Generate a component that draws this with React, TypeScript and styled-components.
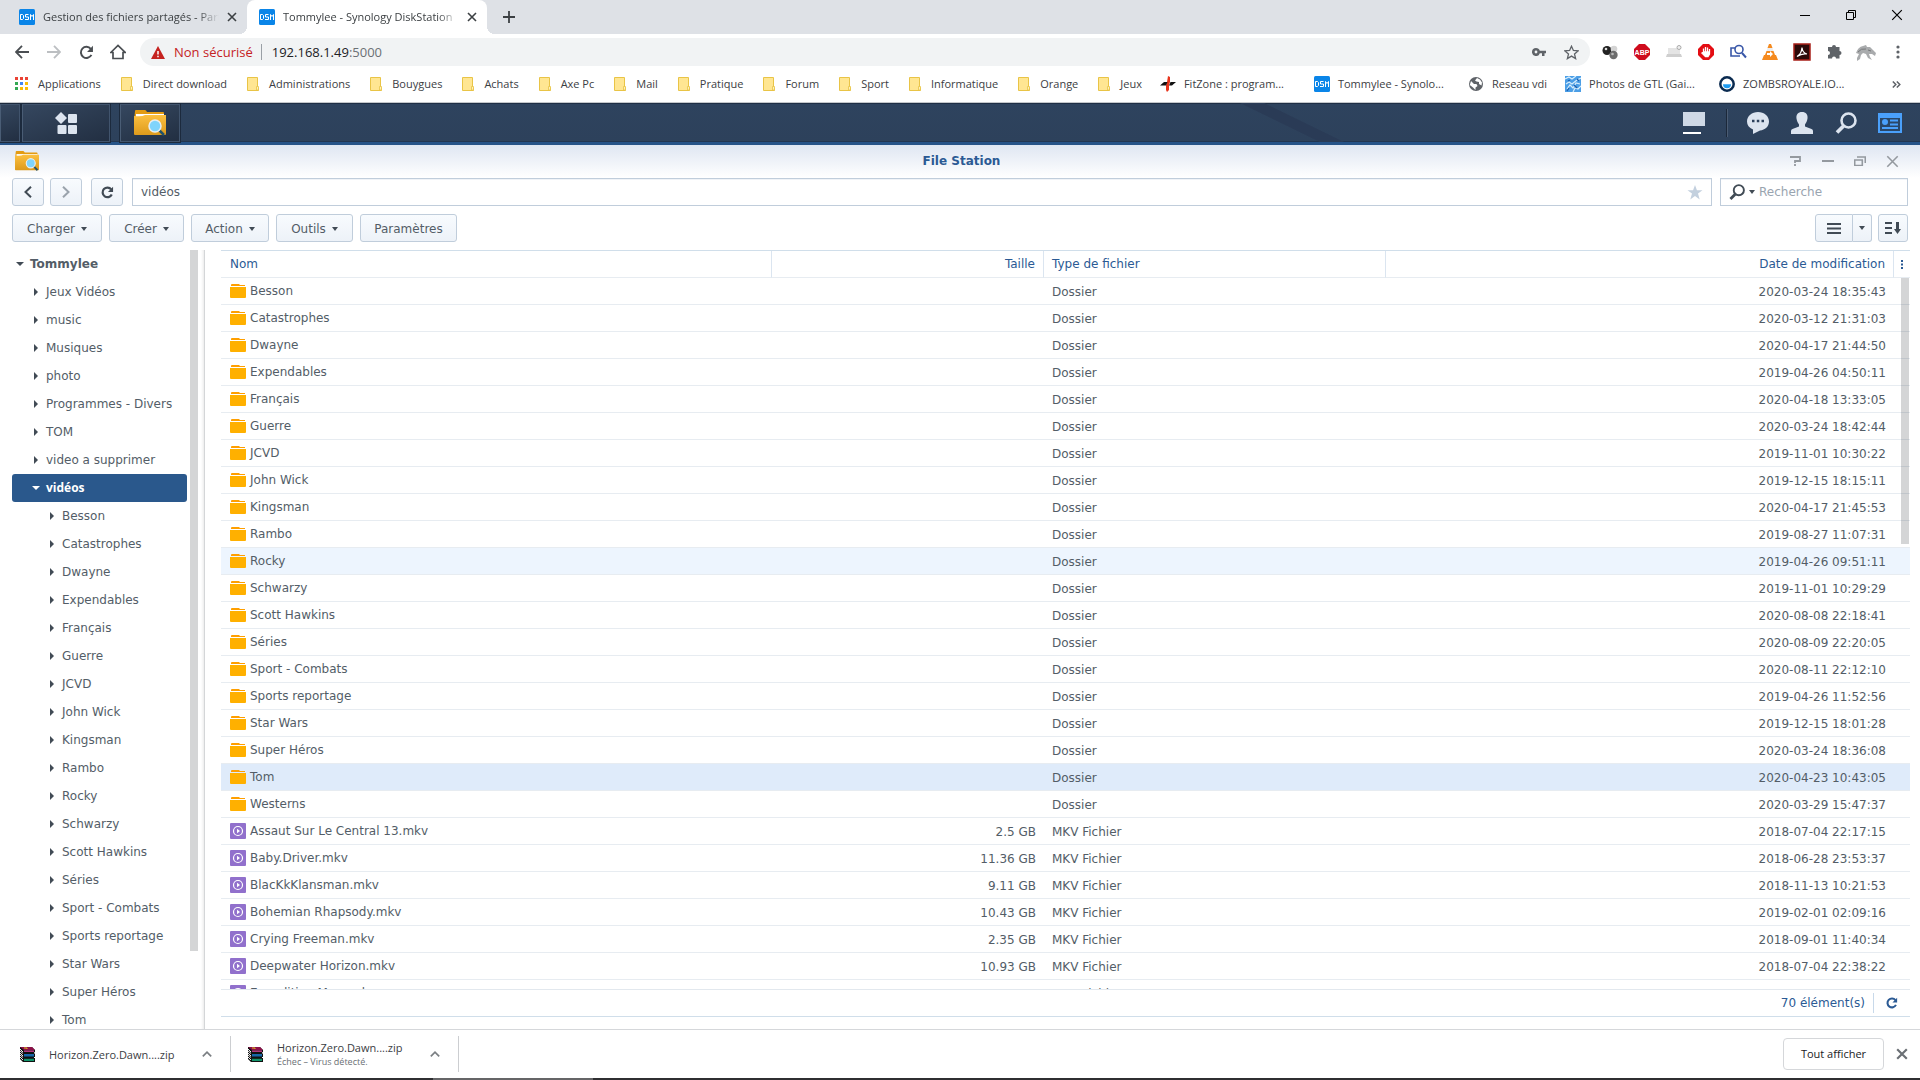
import React from 'react';
import styled, { createGlobalStyle, css } from 'styled-components';

const uiFont = `'Segoe UI', 'Open Sans', 'Noto Sans', sans-serif`;
const dsmFont = `Verdana, 'DejaVu Sans', sans-serif`;

const GlobalStyle = createGlobalStyle`
  *, *::before, *::after { box-sizing: border-box; }
  html, body, #root { height: 100%; }
  body { margin: 0; background: #fff; overflow: hidden; }
  button, input { font: inherit; color: inherit; }
  button { background: none; border: 0; padding: 0; margin: 0; display: inline-flex; align-items: center; justify-content: center; cursor: pointer; }
  a { color: inherit; text-decoration: none; }
  svg { display: block; flex: none; }
`;

const Screen = styled.div`
  height: 100vh;
  display: flex;
  flex-direction: column;
  font-family: ${uiFont};
  font-size: 11px;
  line-height: 16px;
  color: #3c4043;
`;

/* ---------- browser chrome ---------- */

const TabStrip = styled.div`
  flex: none;
  height: 34px;
  display: flex;
  background: #dee1e6;
`;

const Tab = styled.div<{ $active?: boolean }>`
  position: relative;
  width: 240px;
  margin-left: ${p => (p.$active ? 0 : 7)}px;
  padding: 0 10px 0 12px;
  display: flex;
  align-items: center;
  gap: 8px;
  ${p => p.$active && css`
    background: #fff;
    border-radius: 8px 8px 0 0;
    &::before, &::after {
      content: '';
      position: absolute;
      bottom: 0;
      width: 8px;
      height: 8px;
    }
    &::before { left: -8px; background: radial-gradient(circle at 0 0, transparent 8px, #fff 8px); }
    &::after { right: -8px; background: radial-gradient(circle at 100% 0, transparent 8px, #fff 8px); }
  `}
`;

const TabTitle = styled.span`
  flex: 1;
  min-width: 0;
  overflow: hidden;
  white-space: nowrap;
  mask-image: linear-gradient(to right, #000 88%, transparent);
`;

const NewTab = styled.button`
  width: 28px;
  margin-left: 8px;
`;

const WindowControls = styled.div`
  margin-left: auto;
  display: flex;
  height: 29px;
  button { width: 46px; }
`;

const Toolbar = styled.div`
  flex: none;
  height: 36px;
  display: flex;
  align-items: center;
  padding: 0 6px;
  background: #fff;
`;

const ToolButton = styled.button`
  width: 32px;
  height: 28px;
`;

const Omnibox = styled.div`
  flex: 1;
  height: 28px;
  margin: 0 4px 0 6px;
  padding: 0 3px 0 11px;
  border-radius: 14px;
  background: #f1f3f4;
  display: flex;
  align-items: center;
  font-size: 13px;
`;

const Insecure = styled.span`
  color: #c5221f;
  margin-left: 9px;
  padding-right: 8px;
  border-right: 1px solid #9aa0a6;
  line-height: 16px;
`;

const Url = styled.span`
  margin-left: 10px;
  flex: 1;
  color: #202124;
  span { color: #6b7075; }
`;

const Bookmarks = styled.nav`
  flex: none;
  height: 33px;
  display: flex;
  align-items: center;
  gap: 18px;
  padding: 0 19px 4px 14px;
  border-bottom: 1px solid #c4c7cb;
  > button { margin-left: auto; }
`;

const Bookmark = styled.a<{ $long: boolean }>`
  display: flex;
  align-items: center;
  gap: 8px;
  min-width: ${p => (p.$long ? 136 : 0)}px;
  white-space: nowrap;
`;

/* ---------- DSM taskbar ---------- */

const Taskbar = styled.div`
  flex: none;
  height: 42px;
  display: flex;
  background:
    linear-gradient(26deg, transparent 44%, #2a3b56 45%, #2a3b56 55%, transparent 56%) 1222px 0 / 140px 39px no-repeat,
    linear-gradient(#1f2f45 0 1px, #2e435e 1px, #2d415b 38px, #223550 38px);
  border-bottom: 3px solid #265388;
`;

const TaskButton = styled.button<{ $width: number; $gap?: number }>`
  width: ${p => p.$width}px;
  height: 38px;
  margin: 1px 0 0 ${p => p.$gap ?? 0}px;
  border: 1px solid #41546d;
  border-left-color: #4a5d75;
  outline: 1px solid #1c2a3d;
  background: linear-gradient(160deg, #35475f, #222f42);
`;

const TaskTray = styled.div`
  margin-left: auto;
  display: flex;
  align-items: center;
  padding-right: 8px;
  button { width: 44px; height: 38px; }
`;

const TraySeparator = styled.span`
  width: 2px;
  height: 28px;
  margin: 0 8px 0 10px;
  background: #1b283a;
  border-right: 1px solid #4b5c73;
`;

/* ---------- File Station window ---------- */

const Window = styled.main`
  flex: 1;
  min-height: 0;
  display: flex;
  flex-direction: column;
  font-family: ${dsmFont};
  font-size: 12px;
  color: #535d67;
`;

const TitleBar = styled.header`
  flex: none;
  height: 33px;
  display: grid;
  grid-template-columns: 1fr auto 1fr;
  align-items: center;
  padding: 0 12px 1px 15px;
  background: linear-gradient(#dfe6f2, #fff);
`;

const WindowTitle = styled.h1`
  margin: 0;
  font-size: 12px;
  line-height: 16px;
  font-weight: 700;
  color: #2b5a94;
`;

const TitleActions = styled.div`
  justify-self: end;
  display: flex;
  button { width: 32px; height: 24px; }
`;

const buttonFace = css`
  height: 28px;
  border: 1px solid #c0cddb;
  border-radius: 3px;
  background: linear-gradient(#f8fbfe, #edf2f8);
`;

const Bar = styled.div`
  flex: none;
  display: flex;
  align-items: center;
  padding: 0 12px;
  margin-bottom: 8px;
`;

const NavButton = styled.button<{ $gap?: number }>`
  ${buttonFace}
  width: 32px;
  margin-right: ${p => p.$gap ?? 6}px;
`;

const Field = styled.label<{ $width?: number }>`
  height: 28px;
  min-width: 0;
  display: flex;
  align-items: center;
  gap: 4px;
  border: 1px solid #c0cddb;
  padding: 0 8px;
  flex: ${p => (p.$width ? `0 0 ${p.$width}px` : '1')};
  margin-left: ${p => (p.$width ? 8 : 0)}px;
  box-shadow: inset 0 1px #f0f3f7;
  input {
    flex: 1;
    min-width: 0;
    border: 0;
    padding: 0;
    outline: 0;
    background: none;
    &::placeholder { color: #99a4af; opacity: 1; }
  }
`;

const ActionButton = styled.button<{ $width: number }>`
  ${buttonFace}
  width: ${p => p.$width}px;
  margin-right: 7px;
  padding-top: 1px;
  gap: 6px;
`;

const ViewTools = styled.div`
  margin-left: auto;
  display: flex;
`;

const ViewButton = styled.button<{ $width: number; $join?: 'left' | 'right' }>`
  ${buttonFace}
  width: ${p => p.$width}px;
  ${p => p.$join === 'left' && css`border-radius: 3px 0 0 3px;`}
  ${p => p.$join === 'right' && css`border-radius: 0 3px 3px 0; border-left: 0; margin-right: 6px;`}
`;

const Content = styled.div`
  flex: 1;
  min-height: 0;
  display: flex;
`;

const Sidebar = styled.aside`
  position: relative;
  flex: none;
  width: 205px;
  padding-left: 12px;
  overflow: hidden;
  border-right: 1px solid #d4d6d8;
  box-shadow: inset -3px 0 3px -2px #e8e8e8;
`;

const Scrollbar = styled.span<{ $top: number; $right: number; $height: number }>`
  position: absolute;
  top: ${p => p.$top}px;
  right: ${p => p.$right}px;
  width: 8px;
  height: ${p => p.$height}%;
  background: rgba(40, 44, 48, 0.2);
`;

const Tree = styled.ul`
  list-style: none;
  margin: 0;
  padding: 0;
`;

const TreeNode = styled.button<{ $level: number; $selected?: boolean }>`
  width: 175px;
  height: 28px;
  justify-content: flex-start;
  gap: 6px;
  padding-left: ${p => [4, 20, 36][p.$level]}px;
  border-radius: 3px;
  white-space: nowrap;
  font-weight: ${p => (p.$level === 0 ? 700 : 400)};
  ${p => p.$selected && css`
    background: #2a588c;
    color: #fff;
    font-family: 'Open Sans', sans-serif;
    font-weight: 700;
  `}
`;

const ArrowBox = styled.span`
  width: 8px;
  display: flex;
  justify-content: center;
`;

const FilePane = styled.section`
  flex: 1;
  min-width: 0;
  display: flex;
  flex-direction: column;
  padding: 0 10px 12px 16px;
`;

const TableArea = styled.div`
  position: relative;
  flex: 1;
  min-height: 0;
  overflow: hidden;
  border-top: 1px solid #d0deea;
`;

const FileTable = styled.table`
  width: 100%;
  table-layout: fixed;
  border-collapse: separate;
  border-spacing: 0;
  th, td {
    height: 27px;
    padding: 0 8px;
    text-align: left;
    white-space: nowrap;
    overflow: hidden;
    border-bottom: 1px solid #e7ecf1;
    line-height: 16px;
  }
  th {
    font-weight: 400;
    color: #2b5a94;
    border-right: 1px solid #dbe5f0;
  }
  td + td { padding-top: 2px; }
  th:last-child { border-right: 0; padding: 0; }
  th:first-child, td:first-child { padding-left: 9px; }
`;

const Cell = styled.td<{ $right?: boolean }>`
  && { text-align: ${p => (p.$right ? 'right' : 'left')}; }
`;

const HeadCell = styled.th<{ $right?: boolean }>`
  && { text-align: ${p => (p.$right ? 'right' : 'left')}; }
`;

const Row = styled.tr<{ $tone?: string }>`
  background: ${p => p.$tone ?? 'transparent'};
`;

const FileName = styled.span`
  display: flex;
  align-items: center;
  gap: 4px;
`;

const StatusBar = styled.footer`
  flex: none;
  height: 28px;
  display: flex;
  align-items: center;
  justify-content: flex-end;
  border-top: 1px solid #e2e8ee;
  border-bottom: 1px solid #d0deea;
  color: #2b5a94;
  button { width: 37px; height: 20px; border-left: 1px solid #c8d9ea; margin-left: 8px; }
`;

/* ---------- download shelf ---------- */

const Shelf = styled.footer`
  flex: none;
  height: 49px;
  display: flex;
  align-items: center;
  border-top: 1px solid #d5d7da;
  padding-right: 12px;
`;

const Download = styled.div<{ $lead: number }>`
  height: 36px;
  padding: 0 18px 0 ${p => p.$lead}px;
  display: flex;
  align-items: center;
  border-right: 1px solid #ccced1;
`;

const DownloadText = styled.span`
  display: flex;
  flex-direction: column;
  width: 141px;
  margin: 0 12px 0 13px;
  padding-top: 2px;
  font-size: 11px;
  line-height: 14px;
  small { font-size: 9px; line-height: 14px; color: #6b7075; }
`;

const ShowAll = styled.button`
  margin-left: auto;
  margin-right: 12px;
  width: 101px;
  height: 32px;
  border: 1px solid #d5d7da;
  border-radius: 4px;
  color: #202124;
`;

const DesktopEdge = styled.div`
  flex: none;
  height: 2px;
  background: linear-gradient(to right, #2f2f31 433px, #656567 433px 593px, #2f2f31 593px);
`;

/* ---------- icons ---------- */

const DsmIcon = () => (
  <svg width="16" height="16" viewBox="0 0 16 16" aria-hidden="true">
    <rect width="16" height="16" rx="1.500" fill="#0a85e8" />
    <path d="M1.500 5.500h2l1 1v3l-1 1h-2zM9.500 5.500H6.500V8h3v2.500H6M11.500 11V5.500l1.500 2 1.500-2V11" fill="none" stroke="#fff" />
  </svg>
);
const Cross = ({ size = 10, color = '#3c4043', w = 1.6 }: { size?: number; color?: string; w?: number }) => (
  <svg width={size} height={size} viewBox="0 0 10 10">
    <path d="M1 1l8 8M9 1l-8 8" stroke={color} strokeWidth={w} />
  </svg>
);
const FolderMark = () => (
  <svg width="16" height="16" viewBox="0 0 16 16">
    <path d="M2.500 1.500h10v9.500l1 1v2.500h-11z" fill="#ffe692" stroke="#e9c446" />
    <path d="M11.500 14v-3.500h2v3.500z" fill="#fff0b8" stroke="#e9c446" strokeWidth=".8" />
  </svg>
);
const AppsMark = () => (
  <svg width="16" height="16" viewBox="0 0 16 16">
    {['#ea4335', '#ea4335', '#ea4335', '#34a853', '#4285f4', '#fbbc05', '#34a853', '#fbbc05', '#fbbc05'].map((c, i) => (
      <rect key={i} x={1 + (i % 3) * 5} y={1 + Math.floor(i / 3) * 5} width="3" height="3" fill={c} />
    ))}
  </svg>
);
const FitIcon = () => (
  <svg width="16" height="16" viewBox="0 0 16 16">
    <path d="M8 0l2 1 0 5-1 3 0 5-2 2-1-2 0-5 1-3z" fill="#e8341c" />
    <path d="M0 9.500L4 6h3.500L6 9.500zM9 9.500L10.500 6H16l-4 3.500z" fill="#111" />
  </svg>
);
const GlobeIcon = () => (
  <svg width="16" height="16" viewBox="0 0 16 16">
    <circle cx="8" cy="8" r="7" fill="#5f6368" />
    <path d="M3 5l3 3h2.500l1 2-2 1.500V14L5 11.500 1.800 9zM9 2l-2 2.500 1.500 1 2.500.5 0 2 2.500 1.500.5-3L12 3.500z" fill="#fff" />
  </svg>
);
const PhotoIcon = () => (
  <svg width="16" height="16" viewBox="0 0 16 16">
    <rect width="16" height="16" fill="#4b9ee6" />
    <path d="M0 3l4-2 3 2 4-3M1 8l3-2 3 2 5-4 4-2M2 13l3-4 3 3 3-5 4 1M8 16l2-4 3 1 3-3" fill="none" stroke="#d8eefc" strokeWidth="1.200" />
    <path d="M3 5l2-1M9 9l3 3M4 12l-2 3M12 3l2 2" stroke="#1c5fb0" strokeWidth="1.300" />
  </svg>
);
const ZombsIcon = () => (
  <svg width="16" height="16" viewBox="0 0 16 16">
    <circle cx="8" cy="8" r="6.700" fill="#fff" stroke="#0b2b50" strokeWidth="2.500" />
    <path d="M4 8.200h8a4 4 0 0 1-8 0z" fill="#1e9bf0" />
  </svg>
);
const StationIcon = ({ w, h }: { w: number; h: number }) => (
  <svg width={w} height={h} viewBox="0 0 32 26" preserveAspectRatio="none">
    <defs>
      <linearGradient id="st" x1="0" y1="0" x2="0" y2="1"><stop offset="0" stopColor="#fcc040" /><stop offset="1" stopColor="#dd9a1c" /></linearGradient>
    </defs>
    <path d="M1 1q0-1 1-1h9q1 0 2 2h16q1 0 1 1v8H0z" fill="#e39b12" />
    <path d="M2 4h28v5H2z" fill="#fff" />
    <path d="M0 6q8 1 11-1l21 0v19q0 1-1 1H1q-1 0-1-1z" fill="url(#st)" />
    <path d="M25 20l5 5" stroke="#23536b" strokeWidth="2.500" />
    <circle cx="21" cy="16" r="6" fill="#7fd4fb" stroke="#e9eef0" strokeWidth="1.500" />
  </svg>
);
const Caret = ({ color = '#414b55' }: { color?: string }) => (
  <svg width="6" height="4" viewBox="0 0 6 4"><path d="M0 0h6L3 4z" fill={color} /></svg>
);
const ReloadIcon = ({ size, color, w = 2 }: { size: number; color: string; w?: number }) => (
  <svg width={size} height={size} viewBox="0 0 14 14">
    <path d="M11.600 9.200A5.200 5.200 0 1 1 11 3.600" fill="none" stroke={color} strokeWidth={w} />
    <path d="M13 .8v5.700H7.500z" fill={color} />
  </svg>
);
const ListFolder = () => (
  <svg width="16" height="14" viewBox="0 0 16 14">
    <path d="M1 1q0-1 1-1h7l1 1h5v1H1z" fill="#ff9f00" />
    <path d="M0 3h16v10q0 1-1 1H1q-1 0-1-1z" fill="#ffb000" />
  </svg>
);
const VideoIcon = () => (
  <svg width="16" height="16" viewBox="0 0 16 16">
    <rect width="16" height="16" rx="1" fill="#9170cc" />
    <circle cx="8" cy="8" r="4.500" fill="none" stroke="#fff" strokeWidth="1.200" />
    <path d="M7 5.800L10 8l-3 2.200z" fill="#fff" />
  </svg>
);
const RarIcon = () => (
  <svg width="17" height="17" viewBox="0 0 17 17">
    <path d="M1 1h12l3 3v2l-1 0 1 1v4l-1 0 1 1v4H4l-3-3V10l0-1V6L1 5z" fill="#111" />
    <path d="M1 1h12l3 3H5z" fill="#8c1048" />
    <path d="M5 4.500h10v1.300H5z" fill="#d8409a" />
    <path d="M5 8h10v2.500H5z" fill="#1667a8" />
    <path d="M5 12.800h10v2.200H5z" fill="#11946a" />
    <path d="M1 3l3 3M1 7l3 3M1 11l3 3M1 5l3 2.500M1 9l3 2.500" stroke="#eee" />
    <path d="M5 2h3v1" stroke="#e5c01c" fill="none" />
    <path d="M15 7h2M15 11.500h2" stroke="#fff" />
  </svg>
);
const Magnifier = ({ w, h, color }: { w: number; h: number; color: string }) => (
  <svg width={w} height={h} viewBox="0 0 22 22" preserveAspectRatio="none">
    <circle cx="13.500" cy="8.500" r="7" fill="none" stroke={color} strokeWidth="2.600" />
    <path d="M8.500 14l-6.500 6.500" stroke={color} strokeWidth="3.800" />
  </svg>
);
const ShelfChevron = () => (
  <svg width="10" height="6" viewBox="0 0 10 6"><path d="M.8 5.300L5 1.200l4.200 4.100" fill="none" stroke="#7b7f83" strokeWidth="1.700" /></svg>
);

const extensions: [string, React.ReactNode][] = [
  ['Billes', <><circle cx="5" cy="6.500" r="4.500" fill="#222" /><circle cx="4" cy="5" r="1.300" fill="#ddd" /><circle cx="12" cy="5" r="3.300" fill="#d4d4d4" /><circle cx="11.500" cy="11" r="4.200" fill="#6d6d6d" /><circle cx="10.500" cy="10" r="1.300" fill="#bbb" /></>],
  ['ABP', <><path d="M5 0h6l5 5v6l-5 5H5l-5-5V5z" fill="#cf0c1d" /><text x="8" y="10.800" fontSize="7" fontWeight="700" textAnchor="middle" fill="#fff" fontFamily="Liberation Sans, sans-serif">ABP</text></>],
  ['Capture', <><path d="M2 4h12v6H2z" fill="#e4e4e4" /><path d="M1 10h14l1 3H0z" fill="#cfcfcf" /><circle cx="13" cy="3.500" r="2" fill="#eee" stroke="#aaa" /></>],
  ['AdBlock', <><path d="M5 0h6l5 5v6l-5 5H5l-5-5V5z" fill="#e40d13" /><path d="M5.500 8.500V4.500M7.500 8V3M9.500 8V3.500M11.500 9V5M5.500 8h6v2l-1.500 2.500H7.500L4 9z" fill="#fff" stroke="#fff" strokeWidth="1.300" /></>],
  ['Recherche', <><path d="M5 4H1v8h9" fill="none" stroke="#3957a8" strokeWidth="1.600" /><circle cx="9" cy="5.500" r="4" fill="#fff" stroke="#3957a8" strokeWidth="1.600" /><path d="M12 9l4 4.500" stroke="#3957a8" strokeWidth="2" /></>],
  ['VLC', <><path d="M7 0h2l1.500 4h-5z" fill="#f58a1f" /><path d="M5.500 4h5l1 3h-7z" fill="#eee" /><path d="M4.500 7h7l1.500 4h1l2 5H0l2-5h1z" fill="#f58a1f" /><path d="M5 9h3V7l3 3-3 3v-2H5z" fill="#fff" /></>],
  ['Acrobat', <><rect width="16" height="16" fill="#2c0a09" stroke="#a8201a" strokeWidth="1.500" /><path d="M3 12.500Q7.500 10 8 3.500 8.500 9 13 10 8 9 3 12.500z" fill="none" stroke="#fff" strokeWidth="1.200" /></>],
  ['Extensions', <path d="M6 3a2 2 0 0 1 4 0h3.500v4a2 2 0 0 1 0 4v3.500H10a2 2 0 0 0-4 0H2V11a2 2 0 0 0 0-4V3z" fill="#5f6368" />],
  ['Profil', <><path d="M-2 9Q0 3 5 2l3-1 1 2 3 0 3 3 3 3-1 3-3-2-3 0 1 3 2 3-4-2-2-4-3-1-2 2-1 4-3 2 0-3 2-4z" fill="#a9abad" /><path d="M0 8q3-4 8-3M10 6l3 1" stroke="#77797b" fill="none" /></>],
];

/* ---------- data ---------- */

const bookmarks: [string, React.ReactNode][] = [
  ['Applications', <AppsMark />],
  ...['Direct download', 'Administrations', 'Bouygues', 'Achats', 'Axe Pc', 'Mail', 'Pratique', 'Forum', 'Sport', 'Informatique', 'Orange', 'Jeux']
    .map(n => [n, <FolderMark />] as [string, React.ReactNode]),
  ['FitZone : program...', <FitIcon />],
  ['Tommylee - Synolo...', <DsmIcon />],
  ['Reseau vdi', <GlobeIcon />],
  ['Photos de GTL (Gai...', <PhotoIcon />],
  ['ZOMBSROYALE.IO...', <ZombsIcon />],
];

const folders: [string, string][] = [
  ['Besson', '2020-03-24 18:35:43'],
  ['Catastrophes', '2020-03-12 21:31:03'],
  ['Dwayne', '2020-04-17 21:44:50'],
  ['Expendables', '2019-04-26 04:50:11'],
  ['Français', '2020-04-18 13:33:05'],
  ['Guerre', '2020-03-24 18:42:44'],
  ['JCVD', '2019-11-01 10:30:22'],
  ['John Wick', '2019-12-15 18:15:11'],
  ['Kingsman', '2020-04-17 21:45:53'],
  ['Rambo', '2019-08-27 11:07:31'],
  ['Rocky', '2019-04-26 09:51:11'],
  ['Schwarzy', '2019-11-01 10:29:29'],
  ['Scott Hawkins', '2020-08-08 22:18:41'],
  ['Séries', '2020-08-09 22:20:05'],
  ['Sport - Combats', '2020-08-11 22:12:10'],
  ['Sports reportage', '2019-04-26 11:52:56'],
  ['Star Wars', '2019-12-15 18:01:28'],
  ['Super Héros', '2020-03-24 18:36:08'],
  ['Tom', '2020-04-23 10:43:05'],
  ['Westerns', '2020-03-29 15:47:37'],
];

const videos: [string, string, string][] = [
  ['Assaut Sur Le Central 13.mkv', '2.5 GB', '2018-07-04 22:17:15'],
  ['Baby.Driver.mkv', '11.36 GB', '2018-06-28 23:53:37'],
  ['BlacKkKlansman.mkv', '9.11 GB', '2018-11-13 10:21:53'],
  ['Bohemian Rhapsody.mkv', '10.43 GB', '2019-02-01 02:09:16'],
  ['Crying Freeman.mkv', '2.35 GB', '2018-09-01 11:40:34'],
  ['Deepwater Horizon.mkv', '10.93 GB', '2018-07-04 22:38:22'],
  ['Expedition Mars.mkv', '', ''],
];

const tones: Record<string, string> = { Rocky: '#edf5fe', Tom: '#dfebfa' };
const shares = ['Jeux Vidéos', 'music', 'Musiques', 'photo', 'Programmes - Divers', 'TOM', 'video a supprimer'];

const TreeItem = ({ name, level, open, selected }: { name: string; level: number; open?: boolean; selected?: boolean }) => (
  <li>
    <TreeNode $level={level} $selected={selected}>
      <ArrowBox>
        {open ? (
          <svg width="8" height="4" viewBox="0 0 8 4"><path d="M0 0h8L4 4z" fill={selected ? '#fff' : '#414b55'} /></svg>
        ) : (
          <svg width="4" height="8" viewBox="0 0 4 8"><path d="M0 0l4 4-4 4z" fill="#414b55" /></svg>
        )}
      </ArrowBox>
      {name}
    </TreeNode>
  </li>
);

export default function App() {
  return (
    <Screen>
      <GlobalStyle />
      <TabStrip>
        <Tab>
          <DsmIcon />
          <TabTitle>Gestion des fichiers partagés - Partage</TabTitle>
          <button aria-label="Fermer l'onglet"><Cross /></button>
        </Tab>
        <Tab $active>
          <DsmIcon />
          <TabTitle>Tommylee - Synology DiskStation</TabTitle>
          <button aria-label="Fermer l'onglet"><Cross /></button>
        </Tab>
        <NewTab aria-label="Nouvel onglet">
          <svg width="12" height="12" viewBox="0 0 12 12"><path d="M6 0v12M0 6h12" stroke="#3c4043" strokeWidth="1.800" /></svg>
        </NewTab>
        <WindowControls>
          <button aria-label="Réduire"><svg width="10" height="10"><path d="M0 5.500h10" stroke="#000" /></svg></button>
          <button aria-label="Restaurer"><svg width="10" height="10"><path d="M.5 2.500h7v7h-7zM2.500 2.500v-2h7v7h-2" fill="none" stroke="#000" /></svg></button>
          <button aria-label="Fermer"><Cross color="#000" w={1} size={12} /></button>
        </WindowControls>
      </TabStrip>

      <Toolbar>
        <ToolButton aria-label="Précédent"><svg width="14" height="14" viewBox="0 0 14 14"><path d="M14 7H1.500M7 .8L1 7l6 6.200" fill="none" stroke="#4a4e52" strokeWidth="1.800" /></svg></ToolButton>
        <ToolButton aria-label="Suivant"><svg width="14" height="14" viewBox="0 0 14 14"><path d="M0 7h12.500M7 .8L13 7l-6 6.200" fill="none" stroke="#bcbfc2" strokeWidth="1.800" /></svg></ToolButton>
        <ToolButton aria-label="Actualiser"><ReloadIcon size={15} color="#4a4e52" w={1.8} /></ToolButton>
        <ToolButton aria-label="Accueil"><svg width="16" height="16" viewBox="0 0 16 16"><path d="M.8 8.500L8 1.500l7.200 7H13v6H3v-6z" fill="none" stroke="#4a4e52" strokeWidth="1.700" /></svg></ToolButton>
        <Omnibox>
          <svg width="14" height="13" viewBox="0 0 14 13"><path d="M7 0l7 13H0z" fill="#c5221f" /><path d="M7 5v3.500M7 9.800v1.400" stroke="#fff" strokeWidth="1.500" /></svg>
          <Insecure>Non sécurisé</Insecure>
          <Url>192.168.1.49<span>:5000</span></Url>
          <ToolButton aria-label="Mots de passe"><svg width="14" height="8" viewBox="0 0 14 8"><path d="M4 0a4 4 0 1 0 3.800 5.200H10V8h2.500V5.200H14V2.800H7.800A4 4 0 0 0 4 0zm0 2.600a1.400 1.400 0 1 1 0 2.800 1.400 1.400 0 0 1 0-2.800z" fill="#5f6368" fillRule="evenodd" /></svg></ToolButton>
          <ToolButton aria-label="Ajouter aux favoris"><svg width="15" height="15" viewBox="0 0 15 15"><path d="M7.500 1.200l1.900 4.300 4.700.4-3.600 3.100 1.100 4.600-4.100-2.500-4.100 2.500 1.100-4.600L.9 5.900l4.700-.4z" fill="none" stroke="#5f6368" strokeWidth="1.300" /></svg></ToolButton>
        </Omnibox>
        {extensions.map(([name, art]) => (
          <ToolButton key={name} aria-label={name}><svg width="16" height="16" viewBox="0 0 16 16" overflow="visible">{art}</svg></ToolButton>
        ))}
        <ToolButton aria-label="Menu"><svg width="4" height="14" viewBox="0 0 4 14"><g fill="#5f6368"><circle cx="2" cy="2" r="1.600" /><circle cx="2" cy="7" r="1.600" /><circle cx="2" cy="12" r="1.600" /></g></svg></ToolButton>
      </Toolbar>

      <Bookmarks aria-label="Favoris">
        {bookmarks.map(([name, icon]) => (
          <Bookmark key={name} href="#" $long={name.endsWith('...')}>{icon}{name}</Bookmark>
        ))}
        <button aria-label="Autres favoris"><svg width="9" height="7" viewBox="0 0 9 7"><path d="M.8.5l3 3-3 3M4.800.5l3 3-3 3" fill="none" stroke="#5f6368" strokeWidth="1.500" /></svg></button>
      </Bookmarks>

      <Taskbar>
        <TaskButton $width={20} aria-label="Afficher le bureau" />
        <TaskButton $width={88} $gap={2} aria-label="Menu principal">
          <svg width="22" height="22" viewBox="0 0 22 22" fill="#dce4ef"><path d="M6 0l6 6-6 6-6-6z" /><rect x="13" y="2" width="9" height="9" rx="1" /><rect x="2.500" y="13" width="9" height="9" rx="1" /><rect x="13" y="13" width="9" height="9" rx="1" /></svg>
        </TaskButton>
        <TaskButton $width={60} $gap={10} aria-label="File Station"><StationIcon w={32} h={26} /></TaskButton>
        <TaskTray>
          <button aria-label="Bureau"><svg width="22" height="22" viewBox="0 0 22 22" fill="#cfd9e6"><path d="M0 0h22v14H0z" /><path d="M0 20h18v2H0z" fill="#fff" /></svg></button>
          <TraySeparator />
          <button aria-label="Notifications"><svg width="22" height="22" viewBox="0 0 22 22"><path d="M11 0c6 0 11 4 11 9.500 0 5-4 8.500-9 9L6 22v-4.500C2 16 0 13 0 9.500 0 4 5 0 11 0z" fill="#dce4ef" /><path d="M5 9h2.500M9.800 9h2.500M14.500 9H17" stroke="#2c405b" strokeWidth="2.500" /></svg></button>
          <button aria-label="Utilisateur"><svg width="22" height="22" viewBox="0 0 22 22"><path d="M11 0c4 0 6 2.500 5.500 6.500-.3 2.500-1.500 4.500-2.500 6v2l6.500 2.500q1.500.7 1.500 2V22H0v-3q0-1.300 1.500-2L8 14.500v-2C7 11 5.800 9 5.500 6.500 5 2.500 7 0 11 0z" fill="#dce4ef" /></svg></button>
          <button aria-label="Rechercher"><Magnifier w={22} h={22} color="#dce4ef" /></button>
          <button aria-label="Widgets"><svg width="24" height="20" viewBox="0 0 24 20"><path d="M0 0h24v20H0z" fill="#4aa0fb" /><path d="M2 5h20v13H2z" fill="#2a4768" /><circle cx="7" cy="9" r="3" fill="#4aa0fb" /><path d="M12 7.500h8M12 11.500h8M4 15h16" stroke="#4aa0fb" strokeWidth="2" /></svg></button>
        </TaskTray>
      </Taskbar>

      <Window>
        <TitleBar>
          <StationIcon w={24} h={20} />
          <WindowTitle>File Station</WindowTitle>
          <TitleActions>
            <button aria-label="Aide"><svg width="12" height="10" viewBox="0 0 12 10"><path d="M0 1h10v4H5v2M5 8v2" fill="none" stroke="#94999f" strokeWidth="1.800" /></svg></button>
            <button aria-label="Réduire la fenêtre"><svg width="12" height="10"><path d="M0 5h12" stroke="#94999f" strokeWidth="2" /></svg></button>
            <button aria-label="Restaurer la fenêtre"><svg width="12" height="10" viewBox="0 0 12 10"><path d="M3 1h9M11.300 1v6M0 4h9M.7 4v5.500h7.600V4" fill="none" stroke="#94999f" strokeWidth="1.600" /></svg></button>
            <button aria-label="Fermer la fenêtre"><Cross size={13} color="#94999f" w={1.2} /></button>
          </TitleActions>
        </TitleBar>

        <Bar>
          <NavButton aria-label="Dossier précédent"><svg width="8" height="12" viewBox="0 0 8 12"><path d="M7 .8L1.500 6 7 11.200" fill="none" stroke="#414b55" strokeWidth="2" /></svg></NavButton>
          <NavButton $gap={9} aria-label="Dossier suivant"><svg width="8" height="12" viewBox="0 0 8 12"><path d="M1 .8L6.500 6 1 11.200" fill="none" stroke="#9aa3ac" strokeWidth="2" /></svg></NavButton>
          <NavButton $gap={9} aria-label="Recharger"><ReloadIcon size={13} color="#414b55" w={2.4} /></NavButton>
          <Field>
            <input aria-label="Chemin" defaultValue="vidéos" />
            <svg width="16" height="15" viewBox="0 0 14 14"><path d="M7 0l1.800 5H14L9.800 8l1.600 5.500L7 10.300l-4.400 3.200L4.200 8 0 5h5.200z" fill="#c3d0de" /></svg>
          </Field>
          <Field $width={188}>
            <Magnifier w={16} h={16} color="#414b55" />
            <Caret />
            <input aria-label="Recherche" placeholder="Recherche" />
          </Field>
        </Bar>

        <Bar>
          {([['Charger', 90], ['Créer', 75], ['Action', 78], ['Outils', 77]] as [string, number][]).map(([name, width]) => (
            <ActionButton key={name} $width={width}>{name}<Caret /></ActionButton>
          ))}
          <ActionButton $width={97}>Paramètres</ActionButton>
          <ViewTools>
            <ViewButton $width={38} $join="left" aria-label="Vue en liste"><svg width="14" height="11" viewBox="0 0 14 11"><path d="M0 1h14M0 5.500h14M0 10h14" stroke="#414b55" strokeWidth="1.800" /></svg></ViewButton>
            <ViewButton $width={19} $join="right" aria-label="Choisir la vue"><Caret /></ViewButton>
            <ViewButton $width={30} aria-label="Trier"><svg width="16" height="12" viewBox="0 0 16 12"><path d="M0 1h7M0 6h7M0 11h7" stroke="#414b55" strokeWidth="2" /><path d="M12.500 0v8" stroke="#414b55" strokeWidth="3" /><path d="M9 7h7l-3.500 5z" fill="#414b55" /></svg></ViewButton>
          </ViewTools>
        </Bar>

        <Content>
          <Sidebar>
            <Tree>
              <TreeItem name="Tommylee" level={0} open />
              {shares.map(n => <TreeItem key={n} name={n} level={1} />)}
              <TreeItem name="vidéos" level={1} open selected />
              {folders.slice(0, 19).map(([n]) => <TreeItem key={n} name={n} level={2} />)}
            </Tree>
            <Scrollbar $top={0} $right={6} $height={90} />
          </Sidebar>

          <FilePane>
            <TableArea>
              <FileTable>
                <colgroup>
                  <col style={{ width: 551 }} />
                  <col style={{ width: 272 }} />
                  <col style={{ width: 342 }} />
                  <col />
                  <col style={{ width: 16 }} />
                </colgroup>
                <thead>
                  <tr>
                    <HeadCell>Nom</HeadCell>
                    <HeadCell $right>Taille</HeadCell>
                    <HeadCell>Type de fichier</HeadCell>
                    <HeadCell $right>Date de modification</HeadCell>
                    <HeadCell aria-label="Colonnes"><svg width="16" height="9"><path d="M8 0v2M8 3.500v2M8 7v2" stroke="#2b5a94" strokeWidth="2" /></svg></HeadCell>
                  </tr>
                </thead>
                <tbody>
                  {folders.map(([name, date]) => (
                    <Row key={name} $tone={tones[name]}>
                      <Cell><FileName><ListFolder />{name}</FileName></Cell>
                      <Cell $right />
                      <Cell>Dossier</Cell>
                      <Cell $right>{date}</Cell>
                      <Cell />
                    </Row>
                  ))}
                  {videos.map(([name, size, date]) => (
                    <Row key={name}>
                      <Cell><FileName><VideoIcon />{name}</FileName></Cell>
                      <Cell $right>{size}</Cell>
                      <Cell>MKV Fichier</Cell>
                      <Cell $right>{date}</Cell>
                      <Cell />
                    </Row>
                  ))}
                </tbody>
              </FileTable>
              <Scrollbar $top={27} $right={1} $height={36} />
            </TableArea>
            <StatusBar>
              70 élément(s)
              <button aria-label="Rafraîchir la liste"><ReloadIcon size={12} color="#2b5a94" w={2.4} /></button>
            </StatusBar>
          </FilePane>
        </Content>
      </Window>

      <Shelf>
        <Download $lead={19}>
          <RarIcon />
          <DownloadText>Horizon.Zero.Dawn....zip</DownloadText>
          <button aria-label="Options du téléchargement"><ShelfChevron /></button>
        </Download>
        <Download $lead={16}>
          <RarIcon />
          <DownloadText>Horizon.Zero.Dawn....zip<small>Échec – Virus détecté.</small></DownloadText>
          <button aria-label="Options du téléchargement"><ShelfChevron /></button>
        </Download>
        <ShowAll>Tout afficher</ShowAll>
        <button aria-label="Fermer la barre"><Cross size={12} color="#6b7075" w={1.8} /></button>
      </Shelf>
      <DesktopEdge />
    </Screen>
  );
}
